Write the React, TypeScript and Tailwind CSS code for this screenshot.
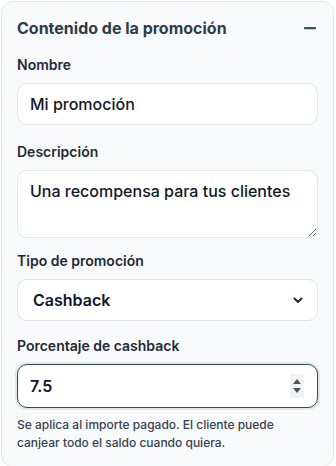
import React from "react"

function Label({ children }: { children: React.ReactNode }) {
  return <label className="block text-[14px] leading-5 font-semibold text-[#1f2937] mb-2">{children}</label>
}

export default function App() {
  return (
    <div className="p-px bg-white" style={{ fontFamily: "Inter, 'Noto Sans', sans-serif" }}>
      <div className="w-[333px] rounded-xl border border-[#e5e7eb] bg-[#f8fafc] px-[15px] pt-[14px] pb-[14px]">
        <div className="flex items-center justify-between mb-[15px]">
          <h2 className="text-[16px] leading-6 font-bold text-[#2f3a4a]">Contenido de la promoción</h2>
          <svg width="12" height="4" viewBox="0 0 12 4" className="mr-[2px] -mt-px">
            <rect x="0" y="1" width="12" height="2.2" rx="0.6" fill="#2f5b50" />
          </svg>
        </div>

        <div className="mb-[17px]">
          <Label>Nombre</Label>
          <input
            readOnly
            value="Mi promoción"
            className="w-full h-[42px] rounded-[10px] border border-[#e2e5ea] bg-white px-3 text-[16px] font-medium text-[#111827] outline-none"
          />
        </div>

        <div className="mb-[13px]">
          <Label>Descripción</Label>
          <textarea
            readOnly
            value="Una recompensa para tus clientes"
            className="block w-full h-[68px] rounded-[10px] border border-[#e2e5ea] bg-white px-3 py-[8px] text-[16px] leading-6 font-medium text-[#111827] outline-none"
          />
        </div>

        <div className="mb-[15px]">
          <Label>Tipo de promoción</Label>
          <div className="relative h-[42px] rounded-[10px] border border-[#e2e5ea] bg-white flex items-center pl-[15px] pr-3">
            <span className="text-[16px] font-semibold text-[#111827]">Cashback</span>
            <svg width="10" height="7" viewBox="0 0 10 7" className="ml-auto mr-[2px]">
              <path d="M1.5 1.5 L5 5 L8.5 1.5" fill="none" stroke="#1f2937" strokeWidth="2" strokeLinecap="round" strokeLinejoin="round" />
            </svg>
          </div>
        </div>

        <div>
          <Label>Porcentaje de cashback</Label>
          <div className="h-[44px] rounded-[10px] border border-[#2f4f46] bg-white ring-2 ring-[#dfe9e5] flex items-center pl-3 pr-[12px]">
            <span className="text-[16px] font-semibold text-[#111827]">7.5</span>
            <div className="ml-auto w-[14px] h-[24px] bg-[#f1f2f4] flex flex-col items-center justify-center gap-[4px] mr-[1px]">
              <svg width="8" height="5" viewBox="0 0 8 5"><path d="M4 0 L8 5 L0 5 Z" fill="#4b5563" /></svg>
              <svg width="8" height="5" viewBox="0 0 8 5"><path d="M0 0 L8 0 L4 5 Z" fill="#4b5563" /></svg>
            </div>
          </div>
          <p className="mt-[8px] text-[12px] leading-[18px] font-medium text-[#374151]">
            Se aplica al importe pagado. El cliente puede canjear todo el saldo cuando quiera.
          </p>
        </div>
      </div>
    </div>
  )
}
